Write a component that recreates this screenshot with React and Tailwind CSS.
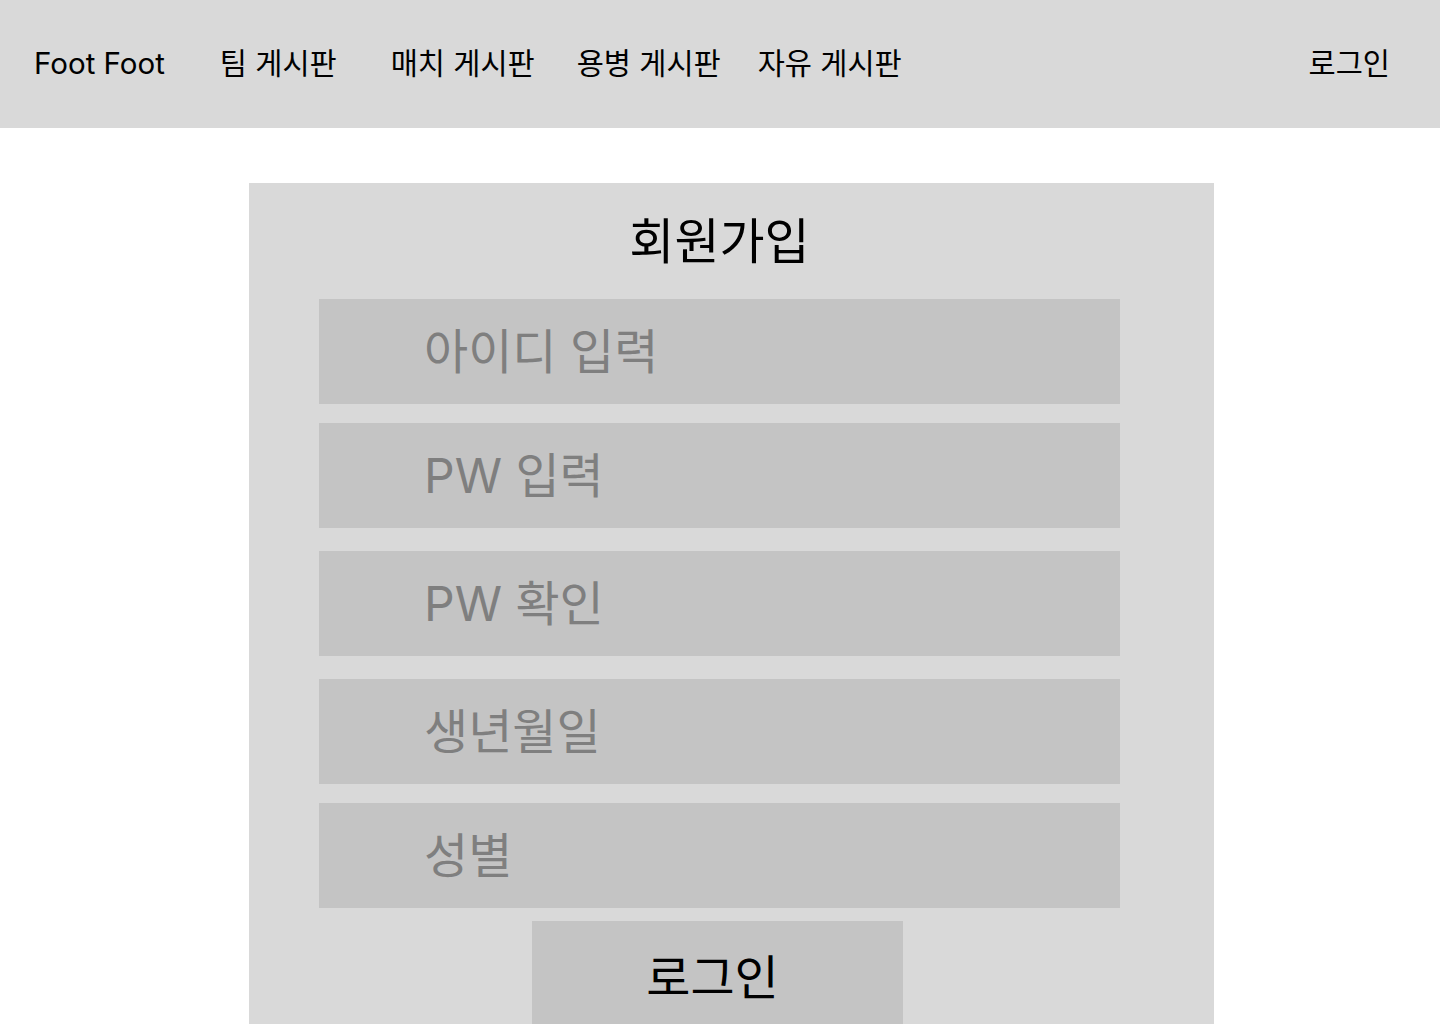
const font = { fontFamily: 'Inter, "Noto Sans CJK KR", sans-serif' };

const fields = [
  { label: '아이디 입력', mt: 'mt-[0px]' },
  { label: 'PW 입력', mt: 'mt-[19px]' },
  { label: 'PW 확인', mt: 'mt-[23px]' },
  { label: '생년월일', mt: 'mt-[23px]' },
  { label: '성별', mt: 'mt-[19px]' },
];

const Header = () => (
  <header className="h-[128px] bg-[#d9d9d9] flex items-center pl-[34px] pr-[50px] pb-[2px] text-[29.5px] text-black">
    <span>Foot Foot</span>
    <nav className="flex items-center">
      <a href="#" className="ml-[55px]">팀 게시판</a>
      <a href="#" className="ml-[54px]">매치 게시판</a>
      <a href="#" className="ml-[42px]">용병 게시판</a>
      <a href="#" className="ml-[37px]">자유 게시판</a>
    </nav>
    <a href="#" className="ml-auto">로그인</a>
  </header>
);

const App = () => {
  return (
    <div className="min-h-[1024px] h-[1024px] overflow-hidden bg-white" style={font}>
      <Header />

      <main className="pt-[55px] pl-[249px]">
        <div className="w-[965px] h-[900px] bg-[#d9d9d9] pl-[70px] pt-[30px]">
          <div className="w-[801px] flex flex-col">
            <h1 className="text-[49px] leading-[58px] text-black text-center font-normal">회원가입</h1>

            <div className="mt-[28px] flex flex-col">
              {fields.map((f) => (
                <div
                  key={f.label}
                  className={`${f.mt} h-[105px] bg-[#c4c4c4] flex items-center pl-[105px] text-[48px] text-[#7f7f7f]`}
                >
                  {f.label}
                </div>
              ))}
            </div>

            <button className="mt-[13px] ml-[213px] w-[371px] h-[108px] bg-[#c4c4c4] text-[48px] text-black pr-[10px] pt-[6px]">
              로그인
            </button>
          </div>
        </div>
      </main>
    </div>
  );
};

export default App;
